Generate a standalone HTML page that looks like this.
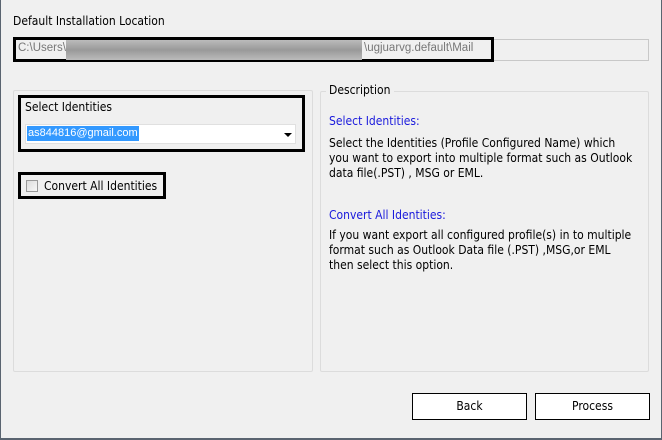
<!DOCTYPE html>
<html><head><style>
body{margin:0;width:662px;height:440px;background:#f0f0f0;position:relative;overflow:hidden;font-family:"DejaVu Sans Condensed","Liberation Sans",sans-serif;font-size:12px;color:#000}
.a{position:absolute;box-sizing:border-box}
</style></head><body>
<div class="a" style="left:0;top:0;width:662px;height:440px;border-left:1px solid #5a6470;border-right:1px solid #5a6470;border-bottom:2px solid #5a6470"></div>
<div class="a" style="left:13px;top:14px;">Default Installation Location</div>
<div class="a" style="left:14px;top:39px;width:635px;height:22px;background:#f0f0f0;border:1px solid #c8c8c8"></div>
<div class="a" style="left:13px;top:37px;width:481px;height:25px;border:3px solid #000"></div>
<div class="a" style="left:18px;top:42px;font-family:'Liberation Sans',sans-serif;font-size:11.5px;color:#777">C:\Users\</div>
<div class="a" style="left:66px;top:40px;width:296px;height:20px;background:linear-gradient(#bbb,#999 50%,#bbb)"></div>
<div class="a" style="left:364px;top:42px;font-family:'Liberation Sans',sans-serif;font-size:11.5px;color:#777">\ugjuarvg.default\Mail</div>

<div class="a" style="left:13px;top:90px;width:300px;height:282px;border:1px solid #dcdcdc;border-radius:2px"></div>
<div class="a" style="left:18px;top:95px;width:287px;height:57px;border:3px solid #000"></div>
<div class="a" style="left:25px;top:100px">Select Identities</div>
<div class="a" style="left:25px;top:124px;width:271px;height:20px;background:#fff;border:1px solid #e0e0e0"></div>
<div class="a" style="left:27px;top:126px;height:15px;background:#3399ff;color:#fff;font-family:'Liberation Sans',sans-serif;font-size:11px;line-height:15px;padding:0 1px">as844816@gmail.com</div>
<div class="a" style="left:284px;top:133px;width:0;height:0;border-left:4px solid transparent;border-right:4px solid transparent;border-top:4px solid #000"></div>
<div class="a" style="left:18px;top:172px;width:148px;height:27px;border:3px solid #000"></div>
<div class="a" style="left:26px;top:180px;width:12px;height:12px;border:1px solid #9a9a9a;background:linear-gradient(135deg,#ddd,#f8f8f8)"></div>
<div class="a" style="left:44px;top:179px">Convert All Identities</div>

<div class="a" style="left:320px;top:91px;width:329px;height:281px;border:1px solid #dcdcdc;border-radius:2px"></div>
<div class="a" style="left:326px;top:83px;background:#f0f0f0;padding:0 3px">Description</div>
<div class="a" style="left:329px;top:114px;color:#1a1adc">Select Identities:</div>
<div class="a" style="left:329px;top:136px;line-height:15px;width:320px">Select the Identities (Profile Configured Name) which<br>you want to export into multiple format such as Outlook<br>data file(.PST) , MSG or EML.</div>
<div class="a" style="left:329px;top:208px;color:#1a1adc">Convert All Identities:</div>
<div class="a" style="left:329px;top:228px;line-height:15px;width:320px">If you want export all configured profile(s) in to multiple<br>format such as Outlook Data file (.PST) ,MSG,or EML<br>then select this option.</div>

<div class="a" style="left:412px;top:393px;width:115px;height:27px;background:#fff;border:1px solid #000;text-align:center;line-height:25px">Back</div>
<div class="a" style="left:535px;top:393px;width:115px;height:27px;background:#fff;border:1px solid #000;text-align:center;line-height:25px">Process</div>
</body></html>
